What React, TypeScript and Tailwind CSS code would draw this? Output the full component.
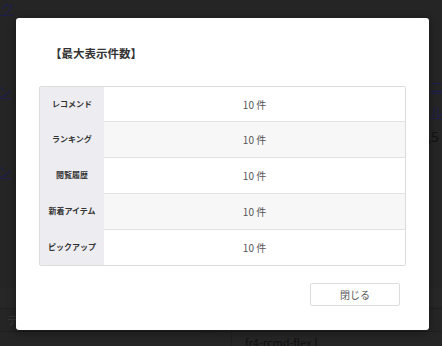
const font = { fontFamily: '"Noto Sans CJK JP", "Noto Sans", sans-serif' };

const rows = [
  { label: "レコメンド", value: "10 件" },
  { label: "ランキング", value: "10 件" },
  { label: "閲覧履歴", value: "10 件" },
  { label: "新着アイテム", value: "10 件" },
  { label: "ピックアップ", value: "10 件" },
];

export default function App() {
  return (
    <div className="relative w-[442px] h-[346px] overflow-hidden bg-[#252525]" style={font}>
      {/* page behind the overlay */}
      <div className="flex h-[288px]">
        <div className="w-[40px] flex flex-col text-[14px] leading-[17px] text-[#1d1f48]">
          <span className="-ml-[28px] underline whitespace-nowrap">リンク</span>
          <span className="mt-[66px] -ml-[2px] underline whitespace-nowrap">ン</span>
          <span className="mt-[6px] -ml-[4px] text-[#151515]">'</span>
          <span className="mt-[40px] -ml-[2px] underline whitespace-nowrap">ン</span>
        </div>
        <div className="ml-auto w-[14px] flex flex-col text-[14px] leading-[17px] text-[#1d1f48] pt-[78px]">
          <span className="ml-[2px] underline whitespace-nowrap">ニュ</span>
          <span className="mt-[8px] ml-[2px] underline whitespace-nowrap">ルー</span>
          <span className="mt-[8px] -ml-[1px] text-[#121212] whitespace-nowrap">,5</span>
        </div>
      </div>
      <div className="h-[21px] bg-[#272727] border-b border-[#1f1f1f]"></div>
      <div className="flex h-[23px] border-b border-[#1d1d1d]">
        <div className="w-[204px] border-r border-[#1f1f1f] pl-[7px] text-[11px] leading-[23px] text-[#3a3a3a]">テ</div>
        <div className="w-[8px]"></div>
        <div className="w-[20px] border-l border-r border-[#1f1f1f]"></div>
      </div>
      <div className="flex">
        <div className="w-[232px] border-r border-[#1f1f1f] h-[20px]"></div>
        <div className="pl-[13px] pt-[3px] text-[11px] leading-[14px] text-[#101010]">fr4-rcmd-flex.l</div>
      </div>

      {/* modal */}
      <div className="absolute left-[16px] top-[18px] w-[413px] h-[312px] bg-white rounded-[3px] shadow-[0_2px_8px_rgba(0,0,0,0.4)] px-[23px] pt-[26px]">
        <h2 className="ml-[11px] text-[11.5px] leading-[18px] font-bold text-[#333]">【最大表示件数】</h2>
        <div className="mt-[24px] border border-[#dcdcdc] rounded-[2px] overflow-hidden">
          {rows.map((r, i) => (
            <div key={r.label} className={`flex ${i === 0 ? "h-[34px]" : "h-[36px]"}`}>
              <div className="w-[64px] bg-[#ededf1] flex items-center justify-center text-[8px] font-bold text-[#333]">
                {r.label}
              </div>
              <div
                className={`flex-1 flex items-center justify-center text-[10px] text-[#555] ${
                  i % 2 === 1 ? "bg-[#f7f7f7]" : "bg-white"
                } ${i > 0 ? "border-t border-[#e2e2e2]" : ""}`}
              >
                {r.value}
              </div>
            </div>
          ))}
        </div>
        <div className="flex justify-end mt-[17px] pr-[6px]">
          <button className="w-[90px] h-[23px] border border-[#dddddd] rounded-[2px] bg-white text-[10px] text-[#555]">
            閉じる
          </button>
        </div>
      </div>
    </div>
  );
}
